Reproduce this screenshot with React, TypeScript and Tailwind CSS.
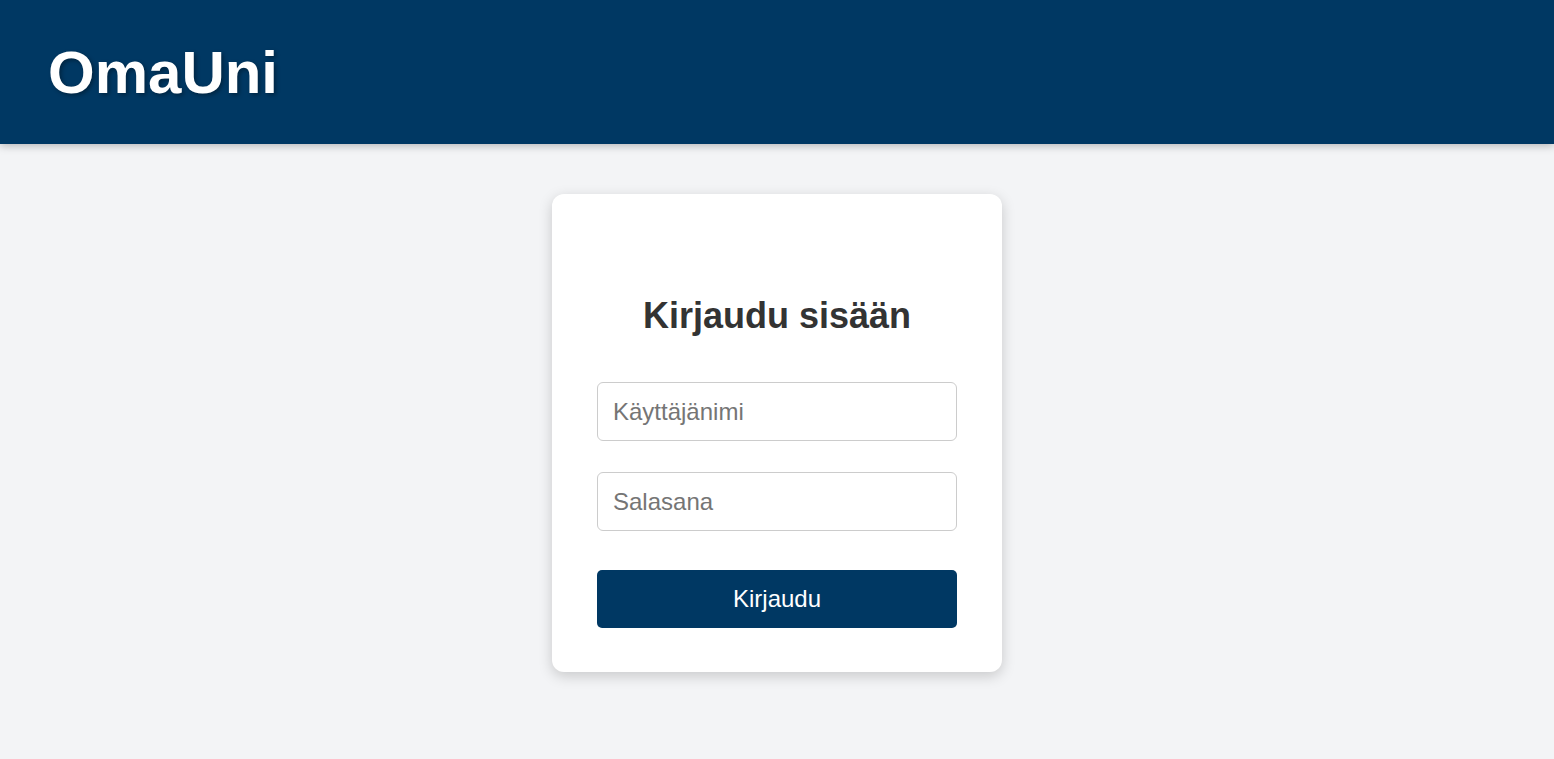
export default function App() {
  return (
    <div className="min-h-screen bg-[#f3f4f6] font-['Liberation_Sans',Arial,sans-serif]">
      <header className="h-[144px] bg-[#003863] flex items-center px-[48px] shadow-[0_2px_8px_rgba(0,0,0,0.25)] relative">
        <h1 className="text-[60px] font-bold text-white leading-[69px] [text-shadow:2px_2px_4px_rgba(0,0,0,0.35)]">
          OmaUni
        </h1>
      </header>

      <main className="flex justify-center pt-[50px]">
        <div className="w-[450px] bg-white rounded-[12px] shadow-[0_4px_14px_rgba(0,0,0,0.18)] pt-[101px] px-[45px] pb-[44px]">
          <h2 className="text-[36px] leading-[41px] font-bold text-[#333333] text-center">
            Kirjaudu sisään
          </h2>
          <form className="flex flex-col mt-[46px]" onSubmit={(e) => e.preventDefault()}>
            <input
              type="text"
              placeholder="Käyttäjänimi"
              className="h-[59px] w-full border border-[#cccccc] rounded-[6px] pl-[15px] pr-[15px] text-[24px] text-[#333333] placeholder:text-[#757575] outline-none"
            />
            <input
              type="password"
              placeholder="Salasana"
              className="h-[59px] w-full border border-[#cccccc] rounded-[6px] pl-[15px] pr-[15px] text-[24px] text-[#333333] placeholder:text-[#757575] outline-none mt-[31px]"
            />
            <button
              type="submit"
              className="h-[58px] w-full bg-[#003863] text-white text-[24px] rounded-[5px] mt-[39px]"
            >
              Kirjaudu
            </button>
          </form>
        </div>
      </main>
    </div>
  );
}
